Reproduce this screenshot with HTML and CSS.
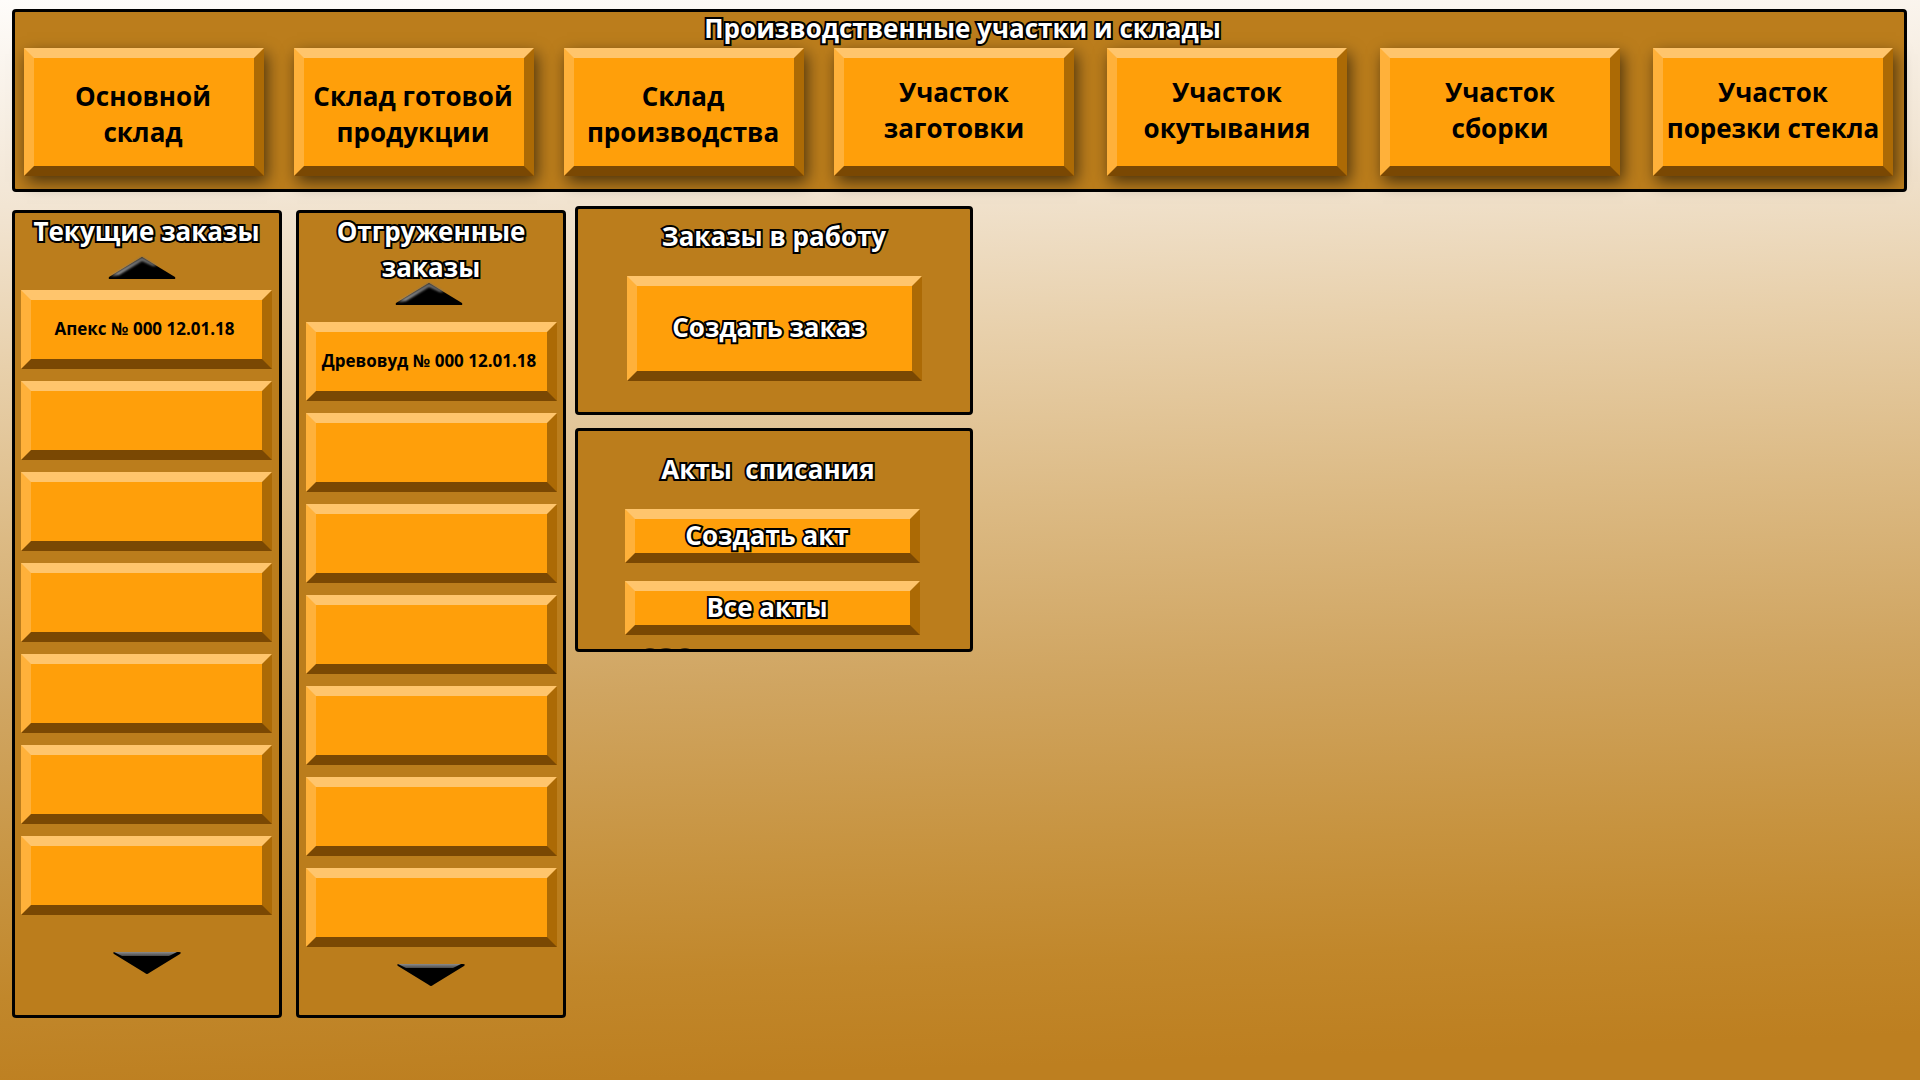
FILE: index.html
```html
<!DOCTYPE html>
<html lang="ru">
<head>
<meta charset="utf-8">
<title>Производственные участки и склады</title>
<link rel="stylesheet" href="styles.css">
</head>
<body>
<svg class="defs" aria-hidden="true">
  <defs>
    <linearGradient id="side" x1="0" y1="0" x2="0" y2="1">
      <stop offset="0" stop-color="#6a6a6a"/>
      <stop offset="1" stop-color="#9a9a9a"/>
    </linearGradient>
    <linearGradient id="lid" x1="0" y1="0" x2="0" y2="1">
      <stop offset="0" stop-color="#8c8c8c"/>
      <stop offset="1" stop-color="#4a4a4a"/>
    </linearGradient>
    <filter id="soft" x="-10%" y="-20%" width="120%" height="140%"><feGaussianBlur stdDeviation="0.8"/></filter>
    <symbol id="arrow-up" viewBox="0 0 70 24">
      <path d="M35 1 L68 21 Q69 23 67 23 L3 23 Q1 23 2 21 Z" fill="#000"/>
      <path d="M4 20 L35 1 L50 10 L46 10 L35 5 L12 19 Z" fill="url(#side)" filter="url(#soft)"/>
    </symbol>
    <symbol id="arrow-down" viewBox="0 0 70 24">
      <path d="M3 1 L67 1 Q70 1 68 3 L37 22 Q35 24 33 22 L2 3 Q0 1 3 1 Z" fill="#000"/>
      <path d="M2 1 L65 1 L57 5 L10 5 Z" fill="url(#lid)"/>
    </symbol>
  </defs>
</svg>

<main class="page">
  <section class="panel sites">
    <h1 class="heading">Производственные участки и склады</h1>
    <nav class="sites-row">
      <div class="group warehouses">
        <button class="bevel site">Основной<br>склад</button>
        <button class="bevel site">Склад готовой<br>продукции</button>
        <button class="bevel site">Склад<br>производства</button>
      </div>
      <div class="group workshops">
        <button class="bevel site">Участок<br>заготовки</button>
        <button class="bevel site">Участок<br>окутывания</button>
        <button class="bevel site">Участок<br>сборки</button>
        <button class="bevel site">Участок<br>порезки стекла</button>
      </div>
    </nav>
  </section>

  <div class="columns">
    <section class="panel orders current">
      <h2 class="heading">Текущие заказы</h2>
      <button class="scroll up" aria-label="Вверх"><svg><use href="#arrow-up"/></svg></button>
      <div class="list">
        <button class="bevel order">Апекс № 000 12.01.18</button>
        <button class="bevel order"></button>
        <button class="bevel order"></button>
        <button class="bevel order"></button>
        <button class="bevel order"></button>
        <button class="bevel order"></button>
        <button class="bevel order"></button>
      </div>
      <button class="scroll down" aria-label="Вниз"><svg><use href="#arrow-down"/></svg></button>
    </section>

    <section class="panel orders shipped">
      <h2 class="heading">Отгруженные<br>заказы</h2>
      <button class="scroll up" aria-label="Вверх"><svg><use href="#arrow-up"/></svg></button>
      <div class="list">
        <button class="bevel order">Древовуд № 000 12.01.18</button>
        <button class="bevel order"></button>
        <button class="bevel order"></button>
        <button class="bevel order"></button>
        <button class="bevel order"></button>
        <button class="bevel order"></button>
        <button class="bevel order"></button>
      </div>
      <button class="scroll down" aria-label="Вниз"><svg><use href="#arrow-down"/></svg></button>
    </section>

    <div class="side">
      <section class="panel work">
        <h2 class="heading">Заказы в работу</h2>
        <button class="bevel action large">Создать заказ</button>
      </section>
      <section class="panel acts">
        <h2 class="heading">Акты&nbsp; списания</h2>
        <button class="bevel action">Создать акт</button>
        <button class="bevel action">Все акты</button>
      </section>
    </div>
  </div>
</main>
</body>
</html>
```
FILE: styles.css
```css
* { box-sizing: border-box; }

body {
  margin: 0;
  min-height: 100vh;
  font-family: "Open Sans", "Noto Sans", sans-serif;
  font-weight: 700;
  color: #000;
  background: linear-gradient(178deg, #fefcfa 0%, #f2e5d3 18%, #e8d0ab 32%, #dcba84 47%, #d0a561 62%, #c7933f 77%, #c1872b 87%, #bd7f20 96%);
}

.defs { position: absolute; width: 0; height: 0; }

.page { padding: 9px 13px 0 12px; }

.panel {
  border: 3px solid #000;
  border-radius: 4px;
  background: #bb7d1c;
}

.heading {
  margin: 0;
  font-size: 26px;
  line-height: 36px;
  font-weight: 700;
  text-align: center;
}

.heading, .action {
  color: #fff;
  -webkit-text-stroke: 4px #000;
  paint-order: stroke fill;
}

.bevel {
  margin: 0;
  padding: 0;
  border: 10px solid;
  border-color: #ffc56c #ac6a05 #7a4803 #ffb13a;
  background: #ff9f0a;
  font-family: inherit;
  font-weight: 700;
  text-align: center;
}

/* top bar */
.sites { padding: 0 11px 13px 9px; }
.sites .heading { padding-left: 8px; line-height: 32px; }
.sites-row { display: flex; justify-content: space-between; margin-top: 4px; }
.group { display: flex; }
.warehouses { gap: 30px; }
.workshops { gap: 33px; }

.site {
  width: 240px;
  height: 128px;
  font-size: 26px;
  line-height: 36px;
  color: #000;
  white-space: nowrap;
  box-shadow: 3px 6px 15px rgba(0, 0, 0, 0.6);
}
.warehouses .site { padding: 4px 2px 0 0; }
.workshops .site { padding-bottom: 4px; }

/* lower columns */
.columns { display: flex; align-items: flex-start; margin-top: 14px; }

.orders {
  display: flex;
  flex-direction: column;
  align-items: center;
  width: 270px;
  height: 808px;
  margin-top: 4px;
}
.current { padding-right: 1px; }
.shipped { margin-left: 14px; }

.list { display: flex; flex-direction: column; gap: 12px; }

.order {
  width: 251px;
  height: 79px;
  padding: 0 4px 2px 0;
  font-size: 17px;
  line-height: 20px;
  color: #000;
  white-space: nowrap;
}

.scroll {
  width: 70px;
  height: 24px;
  padding: 0;
  border: 0;
  background: none;
}
.scroll svg { display: block; width: 70px; height: 24px; }

.current .up { margin: 7px 10px 10px 0; }
.current .down { margin-top: 36px; }
.shipped .up { margin: -3px 4px 16px 0; }
.shipped .down { margin-top: 16px; }

.side { display: flex; flex-direction: column; gap: 13px; width: 398px; margin-left: 9px; }

.work, .acts { display: flex; flex-direction: column; align-items: center; }
.work { height: 209px; padding-top: 9px; }
.acts { position: relative; height: 224px; padding: 20px 4px 0 0; gap: 18px; }
.acts .heading { padding-right: 8px; margin-bottom: 4px; }

/* dark marks that rise from the panel's lower edge */
.acts::after {
  content: "";
  position: absolute;
  left: 66px;
  bottom: -1px;
  width: 50px;
  height: 2px;
  background:
    radial-gradient(ellipse 7px 2px at 6px 100%, #000 60%, transparent),
    radial-gradient(ellipse 8px 2px at 22px 100%, #000 60%, transparent),
    radial-gradient(ellipse 7px 2px at 41px 100%, #000 60%, transparent);
}

.action {
  width: 295px;
  height: 54px;
  padding: 0 10px 4px 0;
  font-size: 26px;
  line-height: 32px;
}
.large { height: 105px; margin-top: 22px; }
```
